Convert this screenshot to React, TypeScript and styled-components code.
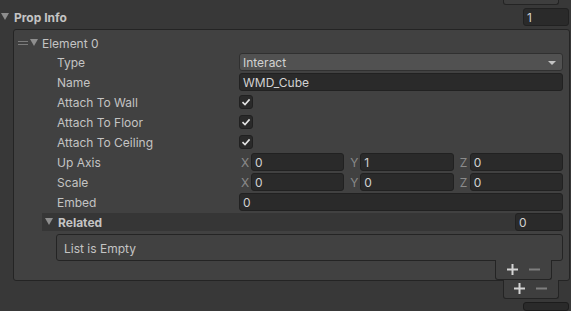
import React from "react";
import styled, { createGlobalStyle } from "styled-components";

const Global = createGlobalStyle`
  html, body { margin: 0; padding: 0; background: #383838; }
  body {
    font-family: Inter, "Noto Sans", sans-serif;
    font-size: 12px;
    color: #c4c4c4;
  }
`;

const Page = styled.div`
  width: 571px;
  height: 311px;
  overflow: hidden;
  display: flex;
  flex-direction: column;
  background: #383838;
`;

const Footer = styled.div<{ $right: number; $w: number; $h?: number; $top?: number }>`
  align-self: flex-end;
  box-sizing: border-box;
  width: ${(p) => p.$w}px;
  height: ${(p) => p.$h ?? 20}px;
  margin-top: ${(p) => p.$top ?? -1}px;
  margin-right: ${(p) => p.$right}px;
  background: #3e3e3e;
  border: 1px solid #242424;
  border-top: none;
  border-radius: 0 0 3px 3px;
  display: flex;
  align-items: center;
  justify-content: space-around;
  padding: 0 6px 0 5px;
`;

const InnerFooter = styled(Footer)`
  background: #414141;
`;

const HeaderRow = styled.div`
  display: flex;
  align-items: center;
  height: 18px;
  margin-top: 3px;
  padding-left: 1px;
  padding-right: 2px;
`;

const Title = styled.span`
  font-weight: 700;
  margin-left: 5px;
  padding-top: 2px;
  color: #c4c4c4;
`;

const Field = styled.div<{ $w?: number }>`
  box-sizing: border-box;
  height: 18px;
  ${(p) => (p.$w ? `width: ${p.$w}px; flex: none;` : "flex: 1; min-width: 0;")}
  background: #2a2a2a;
  border: 1px solid #212121;
  border-radius: 3px;
  padding: 2px 3px 0;
  color: #d2d2d2;
  display: flex;
  align-items: center;
  white-space: nowrap;
`;

const CountField = styled(Field)`
  margin-left: auto;
`;

const OuterList = styled.div`
  box-sizing: border-box;
  height: 257px;
  margin: 3px 1px 0 13px;
  border: 1px solid #242424;
  border-radius: 3px;
  background: #414141;
  display: flex;
  flex-direction: column;
`;

const ElementRow = styled.div`
  display: flex;
  align-items: center;
  height: 18px;
  margin-top: 4px;
  padding-left: 4px;
`;

const Handle = styled.span`
  box-sizing: border-box;
  width: 10px;
  height: 4px;
  border-top: 1px solid #7c7c7c;
  border-bottom: 1px solid #7c7c7c;
  margin-right: 2px;
`;

const ElementLabel = styled.span`
  margin-left: 4px;
  padding-top: 2px;
`;

const Props = styled.div`
  display: flex;
  flex-direction: column;
  gap: 2px;
  margin: 1px 6px 0 43px;
`;

const PropRow = styled.div`
  display: grid;
  grid-template-columns: 182px 1fr;
  align-items: center;
  height: 18px;
`;

const Label = styled.span`
  white-space: nowrap;
  padding-top: 2px;
`;

const Dropdown = styled(Field)`
  background: #515151;
  border-color: #303030;
  justify-content: space-between;
  padding-right: 6px;
`;

const Check = styled.div`
  box-sizing: border-box;
  width: 14px;
  height: 14px;
  background: #2a2a2a;
  border: 1px solid #212121;
  border-radius: 3px;
  display: flex;
  align-items: center;
  justify-content: center;
`;

const Vector = styled.div`
  display: grid;
  grid-template-columns: repeat(3, 1fr);
  gap: 4px;
  height: 18px;
`;

const Axis = styled.div`
  display: flex;
  align-items: center;
`;

const AxisLetter = styled.span`
  width: 10px;
  padding: 2px 0 0 2px;
  color: #8a8a8a;
`;

const RelatedBand = styled.div`
  display: flex;
  align-items: center;
  height: 18px;
  margin: 2px 6px 0 28px;
  padding-left: 3px;
  background: #363636;
`;

const EmptyBox = styled.div`
  box-sizing: border-box;
  height: 27px;
  margin: 3px 6px 0 42px;
  border: 1px solid #242424;
  border-radius: 3px;
  padding: 2px 0 0 7px;
  display: flex;
  align-items: center;
`;

const NextField = styled.div`
  align-self: flex-end;
  box-sizing: border-box;
  width: 46px;
  height: 10px;
  margin: 3px 2px 0 0;
  background: #2a2a2a;
  border: 1px solid #1c1c1c;
  border-radius: 3px;
`;

const Tri = () => (
  <svg width="8" height="7" viewBox="0 0 8 7">
    <polygon points="0,0 8,0 4,7" fill="#8e8e8e" />
  </svg>
);

const Arrow = () => (
  <svg width="8" height="4" viewBox="0 0 8 4">
    <polygon points="0,0 8,0 4,4" fill="#c4c4c4" />
  </svg>
);

const Tick = () => (
  <svg width="10" height="10" viewBox="0 0 10 10">
    <polyline points="1.5,5.2 4,7.6 8.6,2.4" fill="none" stroke="#e2e2e2" strokeWidth="1.6" />
  </svg>
);

const Plus = () => (
  <svg width="11" height="11" viewBox="0 0 11 11">
    <rect x="4.5" y="0" width="2" height="11" fill="#d4d4d4" />
    <rect x="0" y="4.5" width="11" height="2" fill="#d4d4d4" />
  </svg>
);

const Minus = () => (
  <svg width="11" height="11" viewBox="0 0 11 11">
    <rect x="0" y="4.5" width="11" height="2" fill="#7e7e7e" />
  </svg>
);

const Vec = ({ v }: { v: [string, string, string] }) => (
  <Vector>
    {(["X", "Y", "Z"] as const).map((a, i) => (
      <Axis key={a}>
        <AxisLetter>{a}</AxisLetter>
        <Field>{v[i]}</Field>
      </Axis>
    ))}
  </Vector>
);

export default function App() {
  return (
    <Page>
      <Global />
      <Footer $right={12} $w={56} $h={5} $top={0} />
      <HeaderRow>
        <Tri />
        <Title>Prop Info</Title>
        <CountField $w={46}>1</CountField>
      </HeaderRow>
      <OuterList>
        <ElementRow>
          <Handle />
          <Tri />
          <ElementLabel>Element 0</ElementLabel>
        </ElementRow>
        <Props>
          <PropRow>
            <Label>Type</Label>
            <Dropdown>
              <span>Interact</span>
              <Arrow />
            </Dropdown>
          </PropRow>
          <PropRow>
            <Label>Name</Label>
            <Field>WMD_Cube</Field>
          </PropRow>
          <PropRow>
            <Label>Attach To Wall</Label>
            <Check><Tick /></Check>
          </PropRow>
          <PropRow>
            <Label>Attach To Floor</Label>
            <Check><Tick /></Check>
          </PropRow>
          <PropRow>
            <Label>Attach To Ceiling</Label>
            <Check><Tick /></Check>
          </PropRow>
          <PropRow>
            <Label>Up Axis</Label>
            <Vec v={["0", "1", "0"]} />
          </PropRow>
          <PropRow>
            <Label>Scale</Label>
            <Vec v={["0", "0", "0"]} />
          </PropRow>
          <PropRow>
            <Label>Embed</Label>
            <Field>0</Field>
          </PropRow>
        </Props>
        <RelatedBand>
          <Tri />
          <Title>Related</Title>
          <CountField $w={48}>0</CountField>
        </RelatedBand>
        <EmptyBox>List is Empty</EmptyBox>
        <InnerFooter $right={17} $w={57}>
          <Plus />
          <Minus />
        </InnerFooter>
      </OuterList>
      <Footer $right={12} $w={56}>
        <Plus />
        <Minus />
      </Footer>
      <NextField />
    </Page>
  );
}
